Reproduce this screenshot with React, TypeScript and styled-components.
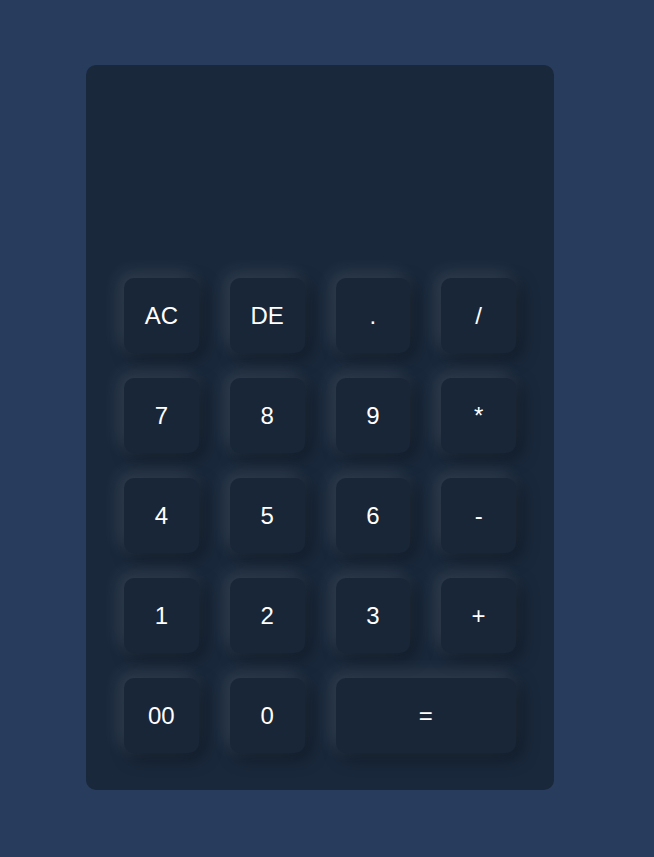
import React from "react";
import styled, { createGlobalStyle } from "styled-components";

const Global = createGlobalStyle`
  html, body { margin: 0; padding: 0; background: #283d5d; }
  body { font-family: "Liberation Sans", Arial, sans-serif; }
`;

const Page = styled.div`
  min-height: 857px;
  display: flex;
  justify-content: center;
  padding: 65px 14px 0 0;
  box-sizing: border-box;
`;

const Calculator = styled.div`
  width: 468px;
  height: 725px;
  background: #19283b;
  border-radius: 10px;
  padding: 0 38px 37px;
  box-sizing: border-box;
  display: flex;
  flex-direction: column;
`;

const Display = styled.div`
  height: 213px;
  flex: none;
`;

const Keys = styled.div`
  display: grid;
  grid-template-columns: repeat(4, 1fr);
  grid-auto-rows: 75px;
  column-gap: 31px;
  row-gap: 25px;
`;

const Key = styled.button<{ $wide?: boolean }>`
  grid-column: ${(p) => (p.$wide ? "span 2" : "auto")};
  border: none;
  border-radius: 10px;
  background: #182638;
  color: #ffffff;
  font-family: "Liberation Sans", Arial, sans-serif;
  font-size: 24px;
  box-shadow: -5px -5px 18px rgba(255, 255, 255, 0.12),
    5px 5px 18px rgba(0, 0, 0, 0.4);
  cursor: pointer;
  padding: 0;
`;

const rows = [
  ["AC", "DE", ".", "/"],
  ["7", "8", "9", "*"],
  ["4", "5", "6", "-"],
  ["1", "2", "3", "+"],
];

export default function App() {
  return (
    <>
      <Global />
      <Page>
        <Calculator>
          <Display />
          <Keys>
            {rows.flat().map((k) => (
              <Key key={k}>{k}</Key>
            ))}
            <Key>00</Key>
            <Key>0</Key>
            <Key $wide>=</Key>
          </Keys>
        </Calculator>
      </Page>
    </>
  );
}
